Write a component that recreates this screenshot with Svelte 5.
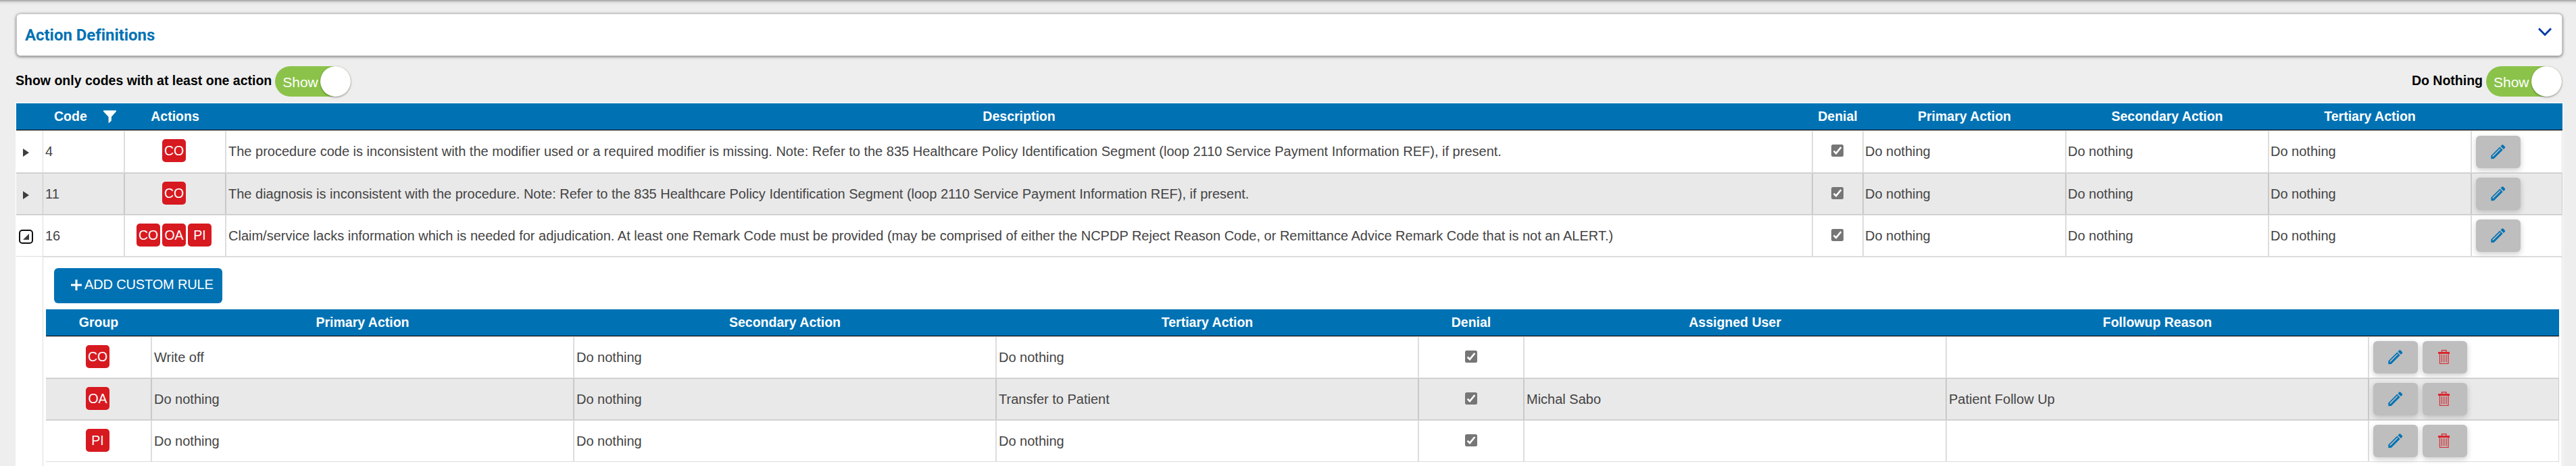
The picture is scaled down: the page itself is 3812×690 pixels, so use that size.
<script>
	const codes = [
		{
			code: '4',
			groups: ['CO'],
			open: false,
			description:
				'The procedure code is inconsistent with the modifier used or a required modifier is missing. Note: Refer to the 835 Healthcare Policy Identification Segment (loop 2110 Service Payment Information REF), if present.'
		},
		{
			code: '11',
			groups: ['CO'],
			open: false,
			description:
				'The diagnosis is inconsistent with the procedure. Note: Refer to the 835 Healthcare Policy Identification Segment (loop 2110 Service Payment Information REF), if present.'
		},
		{
			code: '16',
			groups: ['CO', 'OA', 'PI'],
			open: true,
			description:
				'Claim/service lacks information which is needed for adjudication. At least one Remark Code must be provided (may be comprised of either the NCPDP Reject Reason Code, or Remittance Advice Remark Code that is not an ALERT.)'
		}
	];

	const rules = [
		{ group: 'CO', primary: 'Write off', secondary: 'Do nothing', tertiary: 'Do nothing', user: '', reason: '' },
		{ group: 'OA', primary: 'Do nothing', secondary: 'Do nothing', tertiary: 'Transfer to Patient', user: 'Michal Sabo', reason: 'Patient Follow Up' },
		{ group: 'PI', primary: 'Do nothing', secondary: 'Do nothing', tertiary: 'Do nothing', user: '', reason: '' }
	];
</script>

{#snippet toggle()}
	<span class="toggle"><span class="toggle-text">Show</span><span class="knob"></span></span>
{/snippet}

{#snippet check()}
	<svg class="check" viewBox="0 0 18 18" role="img" aria-label="checked">
		<rect width="18" height="18" rx="2.5" fill="#767676" />
		<path d="M3.6 9.6 7 13 14.4 4" fill="none" stroke="#fff" stroke-width="2.7" />
	</svg>
{/snippet}

{#snippet editButton()}
	<button class="icon-button" aria-label="Edit">
		<svg width="22" height="22" viewBox="0 0 22 22">
			<path fill="#0072b4" d="M.3 21.3V16.6L13.3 3.6 17.6 7.9 4.6 20.9Z" />
			<path fill="none" stroke="#bebebe" stroke-width="1.5" d="M2.6 17.6 14 6.2" />
			<path fill="#0072b4" d="M14.5 2.5 16.4.6Q17.3-.2 18.2.6L20.8 3.2Q21.6 4.1 20.8 5L18.9 6.9Z" />
		</svg>
	</button>
{/snippet}

{#snippet deleteButton()}
	<button class="icon-button delete" aria-label="Delete">
		<svg width="17" height="22" viewBox="0 0 17 22">
			<path fill="#d9262e" d="M0 3H17V6H0Z" />
			<path fill="none" stroke="#d9262e" stroke-width="1.2" d="M5.5 3V.6H12V3M2.5 6V20.5H15V6M5.5 7V18.5M8.7 7V18.5M12 7V18.5" />
		</svg>
	</button>
{/snippet}

<main>
	<section class="panel">
		<h1>Action Definitions</h1>
		<svg class="chevron" width="20" height="13" viewBox="0 0 20 13">
			<path d="M1 1.3 10 10.5 19 1.3" fill="none" stroke="#0039a6" stroke-width="2.9" />
		</svg>
	</section>

	<div class="filters">
		<label>Show only codes with at least one action {@render toggle()}</label>
		<label>Do Nothing {@render toggle()}</label>
	</div>

	<div class="grid">
		<div class="row head codes">
			<div></div>
			<div class="code-head">
				Code
				<svg width="19" height="20" viewBox="0 0 20 20"><path d="M0 0H20V1.5L12.5 10V16L8 20V10L0 1.5Z" fill="#fff" /></svg>
			</div>
			<div>Actions</div>
			<div>Description</div>
			<div>Denial</div>
			<div>Primary Action</div>
			<div>Secondary Action</div>
			<div>Tertiary Action</div>
			<div></div>
		</div>
		{#each codes as item, i}
			<div class="row body codes" class:alt={i % 2 === 1} class:first={i === 0}>
				<div class="expander">
					{#if item.open}
						<span class="focus">
							<svg width="9" height="9" viewBox="0 0 9 9"><path d="M9 0V9H0Z" fill="#3e3e3e" /></svg>
						</span>
					{:else}
						<svg class="closed" width="9" height="12" viewBox="0 0 9 12"><path d="M0 0 9 6 0 12Z" fill="#3e3e3e" /></svg>
					{/if}
				</div>
				<div>{item.code}</div>
				<div class="center badges">
					{#each item.groups as group}<span class="badge">{group}</span>{/each}
				</div>
				<div class="description">{item.description}</div>
				<div class="center">{@render check()}</div>
				<div>Do nothing</div>
				<div>Do nothing</div>
				<div>Do nothing</div>
				<div class="commands">{@render editButton()}</div>
			</div>
		{/each}

		<div class="detail">
			<button class="add">
				<svg width="16" height="16" viewBox="0 0 16 16"><path d="M8 0V16M0 8H16" stroke="#fff" stroke-width="3" /></svg>
				ADD CUSTOM RULE
			</button>
			<div class="rules-grid">
				<div class="row head rules">
					<div>Group</div>
					<div>Primary Action</div>
					<div>Secondary Action</div>
					<div>Tertiary Action</div>
					<div>Denial</div>
					<div>Assigned User</div>
					<div>Followup Reason</div>
					<div></div>
				</div>
				{#each rules as rule, i}
					<div class="row body rules" class:alt={i % 2 === 1}>
						<div class="center badges"><span class="badge">{rule.group}</span></div>
						<div>{rule.primary}</div>
						<div>{rule.secondary}</div>
						<div>{rule.tertiary}</div>
						<div class="center">{@render check()}</div>
						<div>{rule.user}</div>
						<div>{rule.reason}</div>
						<div class="commands">{@render editButton()}{@render deleteButton()}</div>
					</div>
				{/each}
			</div>
		</div>
	</div>
</main>

<style>
	:global(body) {
		background: #eee;
	}
	main {
		box-sizing: border-box;
		height: 690px;
		overflow: hidden;
		padding: 20px 19px 0 23px;
		background: linear-gradient(#aaa 1px, #c8c8c8 2px, #e2e2e2 4px, #eee 7px);
		font: 19.5px 'Liberation Sans', Arial, sans-serif;
		color: #444;
	}
	.panel {
		box-sizing: border-box;
		display: flex;
		justify-content: space-between;
		height: 63px;
		margin: 0 1px;
		padding: 20px 15px 0 12px;
		background: #fff;
		border: 1px solid #c8c8c8;
		border-radius: 6px;
		box-shadow: 0 1px 4px rgba(0, 0, 0, 0.55);
	}
	h1 {
		margin: 0;
		font: bold 24px/22px Roboto, sans-serif;
		letter-spacing: -0.05px;
		color: #0072b4;
	}
	.filters {
		display: flex;
		justify-content: space-between;
		height: 69px;
		box-sizing: border-box;
		padding: 15px 2px 0 0;
	}
	label {
		display: flex;
		gap: 5px;
		height: 45px;
		color: #000;
		font-weight: bold;
		line-height: 42px;
		white-space: nowrap;
	}
	.toggle {
		display: flex;
		justify-content: space-between;
		box-sizing: border-box;
		width: 112px;
		height: 45px;
		padding-left: 11px;
		border-radius: 23px;
		background: #8bc34a;
		color: #fff;
		font-size: 21px;
		font-weight: normal;
		line-height: 47px;
	}
	.knob {
		width: 45px;
		height: 45px;
		border-radius: 50%;
		background: #fff;
		box-shadow: 0 1px 3px rgba(0, 0, 0, 0.4);
	}
	.grid {
		border: 1px solid #fff;
		border-bottom: 0;
		background: #fff;
		height: 540px;
	}
	.row {
		display: grid;
	}
	.codes {
		grid-template-columns: 40px 120px 150px 1fr 75px 300px 300px 300px 135px;
	}
	.rules {
		grid-template-columns: 156px 625px 625px 625px 156px 625px 625px 282px;
	}
	.head {
		height: 39px;
		background: #0072b4;
		border-bottom: 1px solid #000;
		color: #fff;
		font-weight: bold;
		line-height: 39px;
		text-align: center;
	}
	.rules.head {
		line-height: 38px;
	}
	.code-head {
		display: flex;
		align-items: center;
		gap: 24px;
		padding-left: 16px;
	}
	.body {
		height: 62px;
		font-size: 20px;
	}
	.body.first {
		height: 63px;
	}
	.body > div {
		box-sizing: border-box;
		display: flex;
		align-items: center;
		padding: 0 2px;
		border: 1px solid #ddd;
		white-space: nowrap;
	}
	.rules.body > div {
		padding-left: 3px;
	}
	.body > div:first-child {
		border-left: 0;
	}
	.codes.body > div:nth-child(2) {
		border-left: 0;
		padding-left: 3px;
	}
	.body > .description {
		padding-left: 3px;
	}
	.alt > div {
		background: #e9e9e9;
		border-color: #c9c9c9;
	}
	.body > .center {
		justify-content: center;
		padding: 0 3px 3px 2px;
	}
	.body > .badges {
		gap: 3px;
		padding-right: 5px;
	}
	.badge {
		width: 35px;
		height: 34px;
		border-radius: 5px;
		background: #d71920;
		color: #fff;
		font-size: 19.5px;
		line-height: 34px;
		text-align: center;
	}
	.check {
		width: 18px;
		height: 18px;
	}
	.body > .expander {
		padding: 3px 0 0 4px;
	}
	.closed {
		margin-left: 6px;
	}
	.focus {
		display: flex;
		align-items: center;
		justify-content: center;
		box-sizing: border-box;
		width: 21px;
		height: 21px;
		border: 2.5px solid #101010;
		border-radius: 5px;
	}
	.codes.body > .commands,
	.rules.body > .commands {
		gap: 7px;
		padding-left: 6px;
	}
	.icon-button {
		display: flex;
		align-items: center;
		justify-content: center;
		width: 66px;
		height: 48px;
		padding: 0;
		border: 0;
		border-radius: 6px;
		background: #bebebe;
		box-shadow: 0 3px 8px rgba(0, 0, 0, 0.2);
	}
	.delete {
		padding-right: 3px;
	}
	.detail {
		box-sizing: border-box;
		height: 330px;
		margin-left: 39px;
		padding: 16px 4px 0;
		border: 1px solid #ddd;
	}
	.add {
		display: flex;
		align-items: center;
		gap: 4px;
		width: 249px;
		height: 52px;
		margin: 0 0 9px 12px;
		padding: 0 0 3px 25px;
		border: 0;
		border-radius: 6px;
		background: #0072b4;
		color: #fff;
		font: inherit;
		font-size: 20px;
		letter-spacing: -0.15px;
		white-space: nowrap;
	}
</style>
